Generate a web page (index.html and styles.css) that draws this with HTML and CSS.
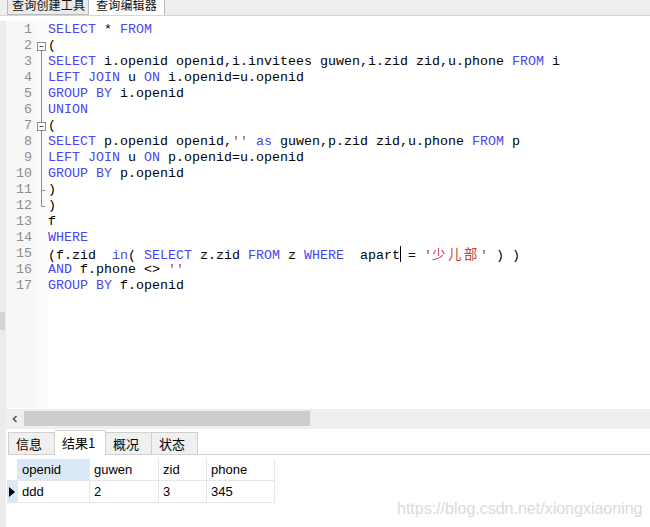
FILE: index.html
```
<!DOCTYPE html>
<html>
<head>
<meta charset="utf-8">
<link rel="stylesheet" href="styles.css">
</head>
<body>
<div class="app">
  <div class="topbar">
    <div class="ttab">查询创建工具</div>
    <div class="ttab active">查询编辑器</div>
  </div>
  <div class="band"></div>
  <div class="body">
    <div class="vstrip"><div class="vthumb"></div></div>
    <div class="main">
      <div class="editor">
        <div class="line"><span class="num">1</span><span class="fold"></span><span class="code"><span class="k">SELECT</span> * <span class="k">FROM</span></span></div>
        <div class="line"><span class="num">2</span><span class="fold"><svg width="12" height="16"><rect x="2.5" y="4.5" width="8" height="8" fill="#fff" stroke="#8c8c8c"/><line x1="4.5" y1="8.5" x2="8.5" y2="8.5" stroke="#555"/><line x1="6.5" y1="12.5" x2="6.5" y2="16" stroke="#8c8c8c"/></svg></span><span class="code">(</span></div>
        <div class="line"><span class="num">3</span><span class="fold"><svg width="12" height="16"><line x1="6.5" y1="0" x2="6.5" y2="16" stroke="#8c8c8c"/></svg></span><span class="code"><span class="k">SELECT</span> i.openid openid,i.invitees guwen,i.zid zid,u.phone <span class="k">FROM</span> i</span></div>
        <div class="line"><span class="num">4</span><span class="fold"><svg width="12" height="16"><line x1="6.5" y1="0" x2="6.5" y2="16" stroke="#8c8c8c"/></svg></span><span class="code"><span class="k">LEFT JOIN</span> u <span class="k">ON</span> i.openid=u.openid</span></div>
        <div class="line"><span class="num">5</span><span class="fold"><svg width="12" height="16"><line x1="6.5" y1="0" x2="6.5" y2="16" stroke="#8c8c8c"/></svg></span><span class="code"><span class="k">GROUP BY</span> i.openid</span></div>
        <div class="line"><span class="num">6</span><span class="fold"><svg width="12" height="16"><line x1="6.5" y1="0" x2="6.5" y2="16" stroke="#8c8c8c"/></svg></span><span class="code"><span class="k">UNION</span></span></div>
        <div class="line"><span class="num">7</span><span class="fold"><svg width="12" height="16"><line x1="6.5" y1="0" x2="6.5" y2="4.5" stroke="#8c8c8c"/><rect x="2.5" y="4.5" width="8" height="8" fill="#fff" stroke="#8c8c8c"/><line x1="4.5" y1="8.5" x2="8.5" y2="8.5" stroke="#555"/><line x1="6.5" y1="12.5" x2="6.5" y2="16" stroke="#8c8c8c"/></svg></span><span class="code">(</span></div>
        <div class="line"><span class="num">8</span><span class="fold"><svg width="12" height="16"><line x1="6.5" y1="0" x2="6.5" y2="16" stroke="#8c8c8c"/></svg></span><span class="code"><span class="k">SELECT</span> p.openid openid,<span class="s">''</span> <span class="k">as</span> guwen,p.zid zid,u.phone <span class="k">FROM</span> p</span></div>
        <div class="line"><span class="num">9</span><span class="fold"><svg width="12" height="16"><line x1="6.5" y1="0" x2="6.5" y2="16" stroke="#8c8c8c"/></svg></span><span class="code"><span class="k">LEFT JOIN</span> u <span class="k">ON</span> p.openid=u.openid</span></div>
        <div class="line"><span class="num">10</span><span class="fold"><svg width="12" height="16"><line x1="6.5" y1="0" x2="6.5" y2="16" stroke="#8c8c8c"/></svg></span><span class="code"><span class="k">GROUP BY</span> p.openid</span></div>
        <div class="line"><span class="num">11</span><span class="fold"><svg width="12" height="16"><line x1="6.5" y1="0" x2="6.5" y2="16" stroke="#8c8c8c"/><line x1="6.5" y1="8.5" x2="10" y2="8.5" stroke="#8c8c8c"/></svg></span><span class="code">)</span></div>
        <div class="line"><span class="num">12</span><span class="fold"><svg width="12" height="16"><line x1="6.5" y1="0" x2="6.5" y2="8.5" stroke="#8c8c8c"/><line x1="6.5" y1="8.5" x2="10" y2="8.5" stroke="#8c8c8c"/></svg></span><span class="code">)</span></div>
        <div class="line"><span class="num">13</span><span class="fold"></span><span class="code">f</span></div>
        <div class="line"><span class="num">14</span><span class="fold"></span><span class="code"><span class="k">WHERE</span></span></div>
        <div class="line"><span class="num">15</span><span class="fold"></span><span class="code">(f.zid  <span class="k">in</span>( <span class="k">SELECT</span> z.zid <span class="k">FROM</span> z <span class="k">WHERE</span>  apart<span class="caret"></span> = <span class="s">'<span class="cjk">少儿部</span>'</span> ) )</span></div>
        <div class="line"><span class="num">16</span><span class="fold"></span><span class="code"><span class="k">AND</span> f.phone &lt;&gt; <span class="s">''</span></span></div>
        <div class="line"><span class="num">17</span><span class="fold"></span><span class="code"><span class="k">GROUP BY</span> f.openid</span></div>
        <div class="line filler"><span class="num"></span><span class="fold"></span><span class="code"></span></div>
      </div>
      <div class="hscroll">
        <div class="harrow"><svg width="8" height="8"><path d="M5.5 1 L2.5 4 L5.5 7" fill="none" stroke="#555" stroke-width="1.6"/></svg></div>
        <div class="hthumb"></div>
      </div>
      <div class="rtabs">
        <div class="rtab">信息</div>
        <div class="rtab active">结果1</div>
        <div class="rtab">概况</div>
        <div class="rtab">状态</div>
        <div class="rfill"></div>
      </div>
      <div class="results">
        <div class="grid">
          <div class="cell rh"></div>
          <div class="cell sel">openid</div>
          <div class="cell">guwen</div>
          <div class="cell">zid</div>
          <div class="cell">phone</div>
          <div class="cell rh cur"><svg width="7" height="10"><path d="M0 0 L6 5 L0 10 Z" fill="#000"/></svg></div>
          <div class="cell">ddd</div>
          <div class="cell">2</div>
          <div class="cell">3</div>
          <div class="cell">345</div>
        </div>
        <div class="watermark">https://blog.csdn.net/xiongxiaoning</div>
      </div>
    </div>
  </div>
</div>
</body>
</html>
```
FILE: styles.css
```
* { box-sizing: border-box; }
html, body { margin: 0; padding: 0; background: #fff; }
body { width: 650px; height: 527px; overflow: hidden; font-family: "Liberation Sans", "Noto Sans CJK SC", sans-serif; }
.app { width: 650px; height: 527px; display: flex; flex-direction: column; }

.topbar { height: 16px; flex: none; background: #eeeeee; border-bottom: 1px solid #d6d6d6; display: flex; overflow: hidden; padding-left: 7px; }
.ttab { height: 16px; flex: none; white-space: nowrap; font-family: "Noto Sans CJK SC", sans-serif; font-size: 12px; letter-spacing: 0.2px; line-height: 12px; color: #111; border: 1px solid #b9b9b9; border-top: none; background: #eaeaea; padding: 0 2px 0 4px; margin-top: -1px; }
.ttab:first-child { width: 82px; }
.ttab.active { background: #fff; width: 76px; border-bottom: none; height: 17px; padding-left: 7px; border-left: none; }

.band { height: 5px; flex: none; background: #fff; }

.body { flex: 1; display: flex; min-height: 0; }
.vstrip { width: 6px; flex: none; background: #ececec; display: flex; flex-direction: column; padding-top: 291px; }
.vthumb { width: 5px; height: 18px; background: #d3d3d3; }
.main { flex: 1; display: flex; flex-direction: column; min-width: 0; }

.editor { height: 388px; flex: none; display: flex; flex-direction: column; padding-top: 1px; background: linear-gradient(to right, #f7f7f7 0, #f7f7f7 29px, #fbfbfb 29px, #fbfbfb 41px, #fff 41px); border-bottom: 1px solid #fff; }
.line { display: flex; height: 16px; flex: none; font-family: "Liberation Mono", monospace; font-size: 13.33px; line-height: 16px; white-space: pre; }
.line.filler { flex: 1; }
.num { width: 29px; text-align: right; padding-right: 3px; color: #8e8e8e; }
.fold { width: 12px; height: 16px; display: block; }
.fold svg { display: block; }
.code { padding-left: 1px; color: #000; }
.k { color: #4646f2; }
.s { color: #c23b3b; }
.cjk { font-family: "Noto Sans CJK SC", sans-serif; letter-spacing: 2.67px; font-size: 13.33px; }
.caret { display: inline-block; width: 0; height: 16px; border-left: 1px solid #000; margin-right: -1px; vertical-align: top; }

.hscroll { height: 20px; flex: none; background: #eeeeee; display: flex; padding-top: 2px; }
.harrow { width: 18px; height: 15px; display: flex; align-items: center; padding-left: 5px; background: #f0f0f0; }
.harrow svg { display: block; }
.hthumb { width: 286px; height: 15px; background: #cdcdcd; }

.rtabs { height: 26px; flex: none; display: flex; align-items: flex-end; padding-left: 2px; }
.rtab { height: 23px; padding: 0 7px; font-family: "Noto Sans CJK SC", sans-serif; font-size: 13px; line-height: 22px; color: #000; background: #f0f0f0; border: 1px solid #d0d0d0; border-left: none; width: 46px; }
.rtab:first-child { border-left: 1px solid #d0d0d0; width: 47px; }
.rtab.active { background: #fff; height: 25px; border-bottom: none; width: 51px; line-height: 23px; padding-left: 7px; }
.rfill { flex: 1; border-bottom: 1px solid #d0d0d0; height: 1px; }

.results { flex: 1; position: relative; padding: 4px 0 0 1px; }
.grid { display: grid; grid-template-columns: 11px 72px 69px 48px 68px; grid-auto-rows: 22px; width: max-content; }
.cell { font-size: 13px; line-height: 22px; padding-left: 4px; color: #000; border-right: 1px solid #e6e6e6; border-bottom: 1px solid #e6e6e6; white-space: nowrap; overflow: hidden; }
.cell.rh { padding-left: 0; }
.cell.sel { background: #dbe8f7; }
.cell.cur { background: #dbe8f7; display: flex; align-items: center; justify-content: center; padding-left: 1px; }
.cell.cur svg { display: block; }
.watermark { position: absolute; left: 391px; top: 45px; font-size: 16px; color: #dadada; font-family: "Liberation Sans", sans-serif; white-space: nowrap; }
```
